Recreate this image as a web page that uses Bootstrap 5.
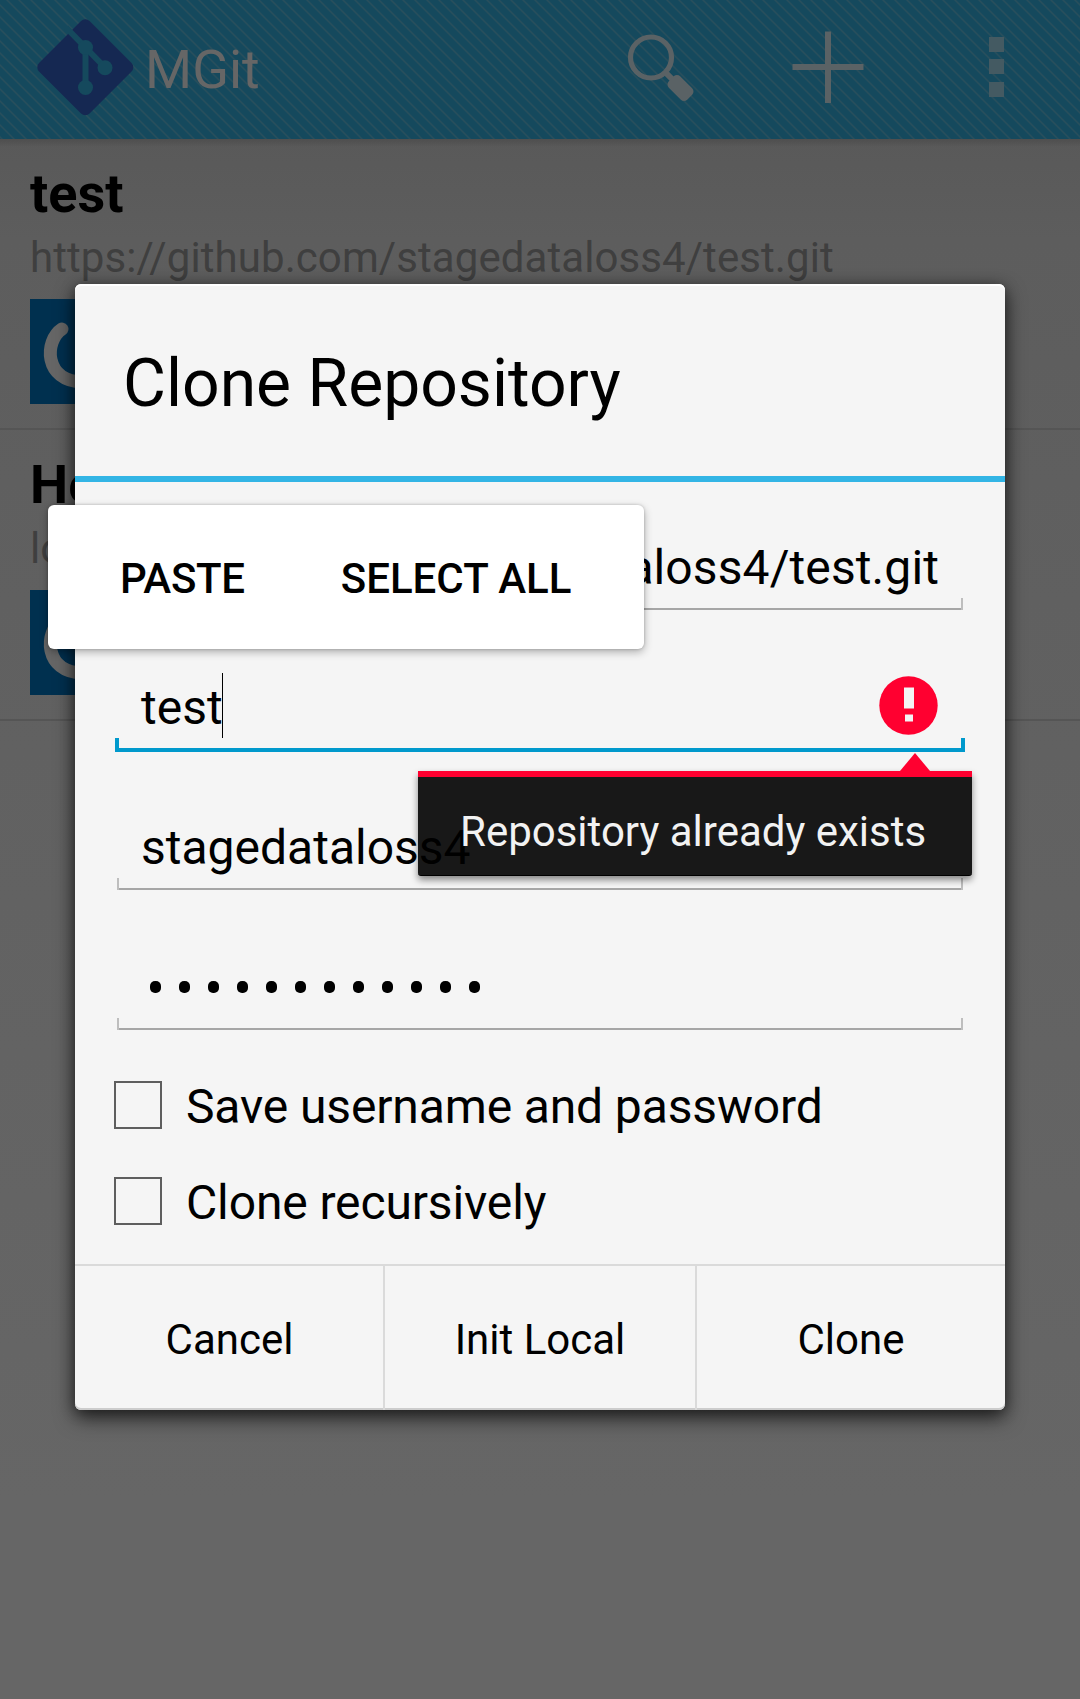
<!DOCTYPE html>
<html lang="en">
<head>
<meta charset="utf-8">
<meta name="viewport" content="width=device-width, initial-scale=1">
<title>MGit</title>
<link href="https://cdn.jsdelivr.net/npm/bootstrap@5.3.0/dist/css/bootstrap.min.css" rel="stylesheet">
<style>
  body { font-family: Roboto, "Liberation Sans", sans-serif; color: #000; font-size: 48px; line-height: 56px; }
  .screen { width: 1080px; height: 1699px; background: linear-gradient(#595959 139px, #5d5d5d 240px, #606060 600px, #666 1500px); }

  /* action bar with thin diagonal pinstripes */
  .action-bar { height: 139px; padding-left: 37px; background-color: #15495d;
    background-image: linear-gradient(45deg, #294f5c 0, #15495d 9%, #15495d 41%, #294f5c 50%, #15495d 59%, #15495d 91%, #294f5c 100%);
    background-size: 12px 12px; background-position: 0 5px; }
  .app-logo { margin-bottom: 5px; }
  .app-name { font-size: 54px; color: #666; margin-left: 11px; }
  .bar-actions { margin-bottom: 5px; }
  .bar-shade { height: 8px; margin-bottom: -8px; background: linear-gradient(#4e4e4e, #59595900); }

  .repo { padding: 23px 30px 24px; border-bottom: 2px solid #555; }
  .repo-name { font-size: 54px; line-height: 64px; margin-bottom: 7px; }
  .repo-url { font-size: 42px; line-height: 50px; letter-spacing: .08px; color: #3f3f3f; margin-bottom: 16px; }

  .dialog { left: 75px; top: 284px; width: 930px; height: 1126px; background: #f5f5f5; border-radius: 6px;
    box-shadow: 0 8px 20px rgba(0,0,0,.62), 0 2px 14px rgba(0,0,0,.35), inset 0 -2px 0 #ccc, inset 0 2px 0 #fff; }
  .dialog-title { height: 198px; padding: 7px 48px 0; font-size: 66px; border-bottom: 6px solid #33b5e5; }
  .dialog-body { padding: 52px 42px 15px; }

  .field { --tick: #bebebe; --line: #a6a6a6; --w: 2px; height: 76px; padding: 6px 24px 0; margin-bottom: 64px;
    background:
      linear-gradient(var(--tick), var(--tick)) 0 100% / var(--w) var(--h, 12px) no-repeat,
      linear-gradient(var(--tick), var(--tick)) 100% 100% / var(--w) var(--h, 12px) no-repeat,
      linear-gradient(var(--line), var(--line)) 0 100% / 100% var(--w) no-repeat; }
  .field.address { letter-spacing: .1px; }
  .field.active { --tick: #0099cc; --line: #0099cc; --w: 4px; --h: 14px; height: 78px; margin: 0 -2px 62px; padding: 6px 27px 0 26px; }
  .caret { width: 1px; height: 65px; margin: -7px 0 0 -1px; background: #000; }
  .error-mark { margin-top: -4px; }
  .dots { gap: 18px; padding-left: 9px; padding-top: 21px; }
  .dots i { width: 11px; height: 12px; border-radius: 5px; background: #000; }

  .options { margin-top: 27px; }
  .option { height: 96px; margin-left: -3px; gap: 24px; letter-spacing: -.13px; }
  .option .tick-box { width: 48px; height: 48px; border: 2px solid #5e5e5e; }
  .option span { padding-top: 3px; }

  .dialog-buttons { height: 146px; border-top: 2px solid #dadada; }
  .dialog-buttons .btn { width: 310px; font-size: 42px; color: #000; border: 0 solid #dadada; border-radius: 0; padding: 3px 0 0; }
  .dialog-buttons .btn:first-child { border-right-width: 2px; padding-left: 1px; }
  .dialog-buttons .btn:last-child { border-left-width: 2px; }

  .edit-menu { left: 48px; top: 505px; width: 596px; height: 144px; padding: 3px 0 0 72px; gap: 96px; background: #fff;
    border-radius: 6px; font-size: 42px; font-weight: 500; box-shadow: 0 3px 8px rgba(0,0,0,.3), 0 0 3px rgba(0,0,0,.2); }
  .edit-menu span:first-child { letter-spacing: -.3px; }

  .error-tip { left: 418px; top: 753px; width: 554px; }
  .error-tip svg { margin-left: 482px; }
  .error-tip .tip-text { height: 105px; border-top: 6px solid #ff0030; border-bottom: 1px solid #000; background: rgba(0,0,0,.9);
    color: #f2f2f2; font-size: 42px; padding: 11px 0 0 42px; border-radius: 0 0 3px 3px; box-shadow: 0 4px 7px rgba(0,0,0,.45); }
</style>
</head>
<body>
<div class="screen position-relative overflow-hidden">

  <header class="action-bar d-flex align-items-center">
    <svg class="app-logo" width="97" height="97" viewBox="0 0 97 97">
      <rect x="12.600" y="12.600" width="71.400" height="71.400" rx="6" transform="rotate(45 48.300 48.300)" fill="#152852"/>
      <g stroke="#15495d" fill="none" stroke-width="6">
        <path d="M29 8.500 68 48.500"/>
        <path d="M48.500 28V68"/>
      </g>
      <g fill="#15495d"><circle cx="48.500" cy="28.500" r="7.500"/><circle cx="68" cy="48.700" r="7.500"/><circle cx="48.500" cy="68.500" r="7.500"/></g>
    </svg>
    <span class="app-name">MGit</span>
    <svg class="bar-actions ms-auto" width="460" height="110" viewBox="620 12 460 110" fill="#5a6265">
      <circle cx="651" cy="57.500" r="20.500" fill="none" stroke="#5a6265" stroke-width="5.200"/>
      <path d="M664 71 673 80" stroke="#5a6265" stroke-width="6"/>
      <rect x="667.500" y="80" width="26" height="16" rx="4.500" transform="rotate(45 680.500 88)"/>
      <path d="M825 31.500h6v32.500h32.500v6H831v33h-6V70h-32.500v-6H825z"/>
      <path d="M989 37h15v15h-15zM989 59h15v15h-15zM989 82h15v15h-15z" fill="#445a62"/>
    </svg>
  </header>
  <div class="bar-shade"></div>

  <main>
    <article class="repo">
      <div class="repo-name fw-bold">test</div>
      <div class="repo-url">https://github.com/stagedataloss4/test.git</div>
      <svg class="d-block" width="105" height="105" viewBox="0 0 105 105">
        <rect width="105" height="105" fill="#00304f"/>
        <path d="M32 30C14 42 14 82 52 83 90 82 92 43 72 30" fill="none" stroke="#666" stroke-width="13" stroke-linecap="round"/>
        <path d="M52 20v30" stroke="#666" stroke-width="12" stroke-linecap="round"/>
      </svg>
    </article>
    <article class="repo">
      <div class="repo-name fw-bold">He</div>
      <div class="repo-url">lo</div>
      <svg class="d-block" width="105" height="105" viewBox="0 0 105 105">
        <rect width="105" height="105" fill="#00304f"/>
        <path d="M32 30C14 42 14 82 52 83 90 82 92 43 72 30" fill="none" stroke="#666" stroke-width="13" stroke-linecap="round"/>
        <path d="M52 20v30" stroke="#666" stroke-width="12" stroke-linecap="round"/>
      </svg>
    </article>
  </main>

  <section class="dialog position-absolute" role="dialog" aria-label="Clone Repository">
    <div class="dialog-title d-flex align-items-center">Clone Repository</div>
    <div class="dialog-body">
      <div class="field address d-flex justify-content-end text-nowrap overflow-hidden">dataloss4/test.git</div>
      <div class="field active d-flex">
        <span>test</span><span class="caret"></span>
        <svg class="error-mark ms-auto" width="59" height="59" viewBox="0 0 59 59">
          <circle cx="29.500" cy="29.500" r="29.200" fill="#ff0030"/>
          <path d="M25 11.500h10v21H25zM26 38.500h8v7h-8z" fill="#f4f4f4"/>
        </svg>
      </div>
      <div class="field">stagedataloss4</div>
      <div class="field mb-0"><div class="dots d-flex"><i></i><i></i><i></i><i></i><i></i><i></i><i></i><i></i><i></i><i></i><i></i><i></i></div></div>
      <div class="options">
        <label class="option d-flex align-items-center"><b class="tick-box"></b><span>Save username and password</span></label>
        <label class="option d-flex align-items-center"><b class="tick-box"></b><span>Clone recursively</span></label>
      </div>
    </div>
    <div class="dialog-buttons d-flex">
      <button class="btn">Cancel</button>
      <button class="btn">Init Local</button>
      <button class="btn">Clone</button>
    </div>
  </section>

  <div class="error-tip position-absolute">
    <svg class="d-block" width="30" height="18" viewBox="0 0 30 18"><path d="M15 0 30 18H0z" fill="#ff0030"/></svg>
    <div class="tip-text d-flex align-items-center">Repository already exists</div>
  </div>

  <div class="edit-menu position-absolute d-flex align-items-center">
    <span>PASTE</span><span>SELECT ALL</span>
  </div>
</div>
<script src="https://cdn.jsdelivr.net/npm/bootstrap@5.3.0/dist/js/bootstrap.bundle.min.js"></script>
</body>
</html>
